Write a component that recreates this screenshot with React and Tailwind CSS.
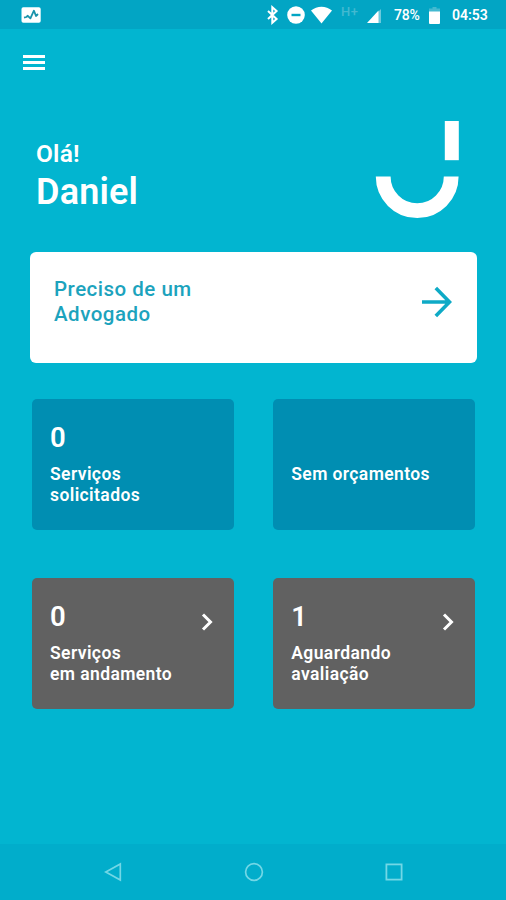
function StatusBar() {
  return (
    <header className="flex h-[29px] items-center bg-[#02a5c4] pl-[21px]">
      <svg width="20" height="16" viewBox="0 0 20 16">
        <rect x="0.5" y="0.2" width="19.2" height="15.6" rx="1.8" fill="#fff" />
        <path
          d="M3 10.6l2.4-.6 1.4-1.2 2.6 2.6 3.5-7.7 2.1 5.3 2-2"
          fill="none"
          stroke="#1b93aa"
          strokeWidth="1.8"
          strokeLinejoin="round"
        />
      </svg>

      {/* Bluetooth, do not disturb, wifi, network, battery */}
      <svg className="ml-[225px]" width="13" height="20" viewBox="0 0 13 20">
        <path
          d="M2 6l8.6 8-4.3 3.8V2.2l4.3 3.8L2 14"
          fill="none"
          stroke="#fff"
          strokeWidth="2"
        />
      </svg>
      <svg className="ml-[8px]" width="18" height="18" viewBox="0 0 18 18">
        <circle cx="9" cy="9" r="8.8" fill="#fff" />
        <path d="M4.5 9h9" stroke="#02a5c4" strokeWidth="2.4" />
      </svg>
      <svg className="ml-[5px]" width="23" height="18" viewBox="0 0 23 18">
        <path d="M1 4.6C7-.6 16-.6 22 4.6L11.5 17.6z" fill="#fff" />
      </svg>
      <span className="mb-[6px] ml-[8px] w-[19px] whitespace-nowrap text-[13px] font-medium leading-4 tracking-[0.6px] text-[#43b9d0]">
        H+
      </span>
      <svg className="ml-[7px] mt-[2px]" width="15" height="15" viewBox="0 0 15 15">
        <path d="M11 4L14 1v14h-3z" fill="#6cc9dc" />
        <path d="M0 15L11.5 2.5V15z" fill="#fff" />
      </svg>
      <span className="ml-[12px] mt-[2px] w-[26px] whitespace-nowrap text-[14px] font-medium tracking-[-0.2px]">
        78%
      </span>
      <svg className="ml-[9px] mt-[1px]" width="11" height="18" viewBox="0 0 11 18">
        <path d="M3.5 1h4v1.6H11V6H0V2.6h3.5z" fill="#43b9d0" />
        <path d="M0 5.5h11V17a1 1 0 0 1-1 1H1a1 1 0 0 1-1-1z" fill="#fff" />
      </svg>
      <span className="ml-[12px] mt-[2px] whitespace-nowrap text-[14px] font-semibold">04:53</span>
    </header>
  );
}

function Chevron() {
  return (
    <svg className="mt-[35px]" width="13" height="18" viewBox="0 0 13 18">
      <path d="M2 1.5L9.5 9 2 16.5" fill="none" stroke="#fff" strokeWidth="3" />
    </svg>
  );
}

function Card({ count, children, className, arrow }) {
  return (
    <button
      type="button"
      className={`flex h-[131px] w-[202px] items-start justify-between rounded-[5px] pl-[18px] pr-[20.5px] text-left ${className}`}
    >
      <div className="pt-[24px]">
        <p className="h-[30px] text-[27.5px] font-semibold leading-[30px]">{count}</p>
        <p className="mt-[11px] whitespace-nowrap text-[17.5px] font-semibold leading-[21px] tracking-[0.4px]">
          {children}
        </p>
      </div>
      {arrow && <Chevron />}
    </button>
  );
}

export default function App() {
  return (
    <div className="flex h-[900px] w-[506px] flex-col overflow-hidden bg-[#02b5d0] font-['Roboto',sans-serif] text-white">
      <StatusBar />

      <main className="flex-1">
        <button type="button" className="ml-[23px] mt-[26px] flex w-[22px] flex-col gap-[3px]">
          <span className="h-[3px] w-full bg-white" />
          <span className="h-[3px] w-full bg-white" />
          <span className="h-[3px] w-full bg-white" />
        </button>

        {/* Greeting */}
        <div className="mt-[50.5px] flex h-[98px] justify-between pl-[36px] pr-[47px]">
          <h1 className="pt-[19.5px] font-semibold">
            <span className="block text-[24.5px] leading-[28px] tracking-[0.2px]">Olá!</span>
            <span className="block text-[36px] leading-[48px] tracking-[0.2px]">Daniel</span>
          </h1>
          <svg width="84" height="98" viewBox="0 0 84 98">
            <path d="M69.8 0h14v39.2h-14z" fill="#fff" />
            <path
              d="M8.2 55.5a34 34.2 0 0 0 68 0"
              fill="none"
              stroke="#fff"
              strokeWidth="14.8"
            />
          </svg>
        </div>

        <button
          type="button"
          className="ml-[30px] mt-[33.5px] flex h-[111px] w-[447px] items-start justify-between rounded-[6px] bg-white pl-[24px] pr-[25px] text-left"
        >
          <span className="pt-[25px] text-[20.5px] font-medium leading-[25px] tracking-[0.5px] text-[#1ca3bd]">
            Preciso de um
            <br />
            Advogado
          </span>
          <svg className="mt-[34px]" width="31" height="32" viewBox="0 0 31 32">
            <path
              d="M1 16h27M14.8 2L28.5 16 14.8 30"
              fill="none"
              stroke="#0eaac6"
              strokeWidth="3.6"
            />
          </svg>
        </button>

        <div className="ml-[32px] mt-[35.5px] grid w-[443.5px] grid-cols-2 gap-x-[39px] gap-y-[48px]">
          <Card count="0" className="bg-[#008eb2]">
            Serviços
            <br />
            solicitados
          </Card>
          <Card className="bg-[#008eb2]">Sem orçamentos</Card>
          <Card count="0" className="bg-[#616161]" arrow>
            Serviços
            <br />
            em andamento
          </Card>
          <Card count="1" className="bg-[#616161]" arrow>
            Aguardando
            <br />
            avaliação
          </Card>
        </div>
      </main>

      <nav className="flex h-[56px] items-center justify-between bg-[#01adcb] pl-[104px] pr-[102px]">
        <svg width="19" height="20" viewBox="0 0 19 20">
          <path d="M1.8 10L16.3 2v16z" fill="none" stroke="#72d7e6" strokeWidth="1.7" />
        </svg>
        <svg width="20" height="20" viewBox="0 0 20 20">
          <circle cx="10" cy="10" r="8.4" fill="none" stroke="#72d7e6" strokeWidth="1.7" />
        </svg>
        <svg width="20" height="20" viewBox="0 0 20 20">
          <rect x="2.4" y="2.4" width="15.2" height="15.2" fill="none" stroke="#72d7e6" strokeWidth="1.8" />
        </svg>
      </nav>
    </div>
  );
}
